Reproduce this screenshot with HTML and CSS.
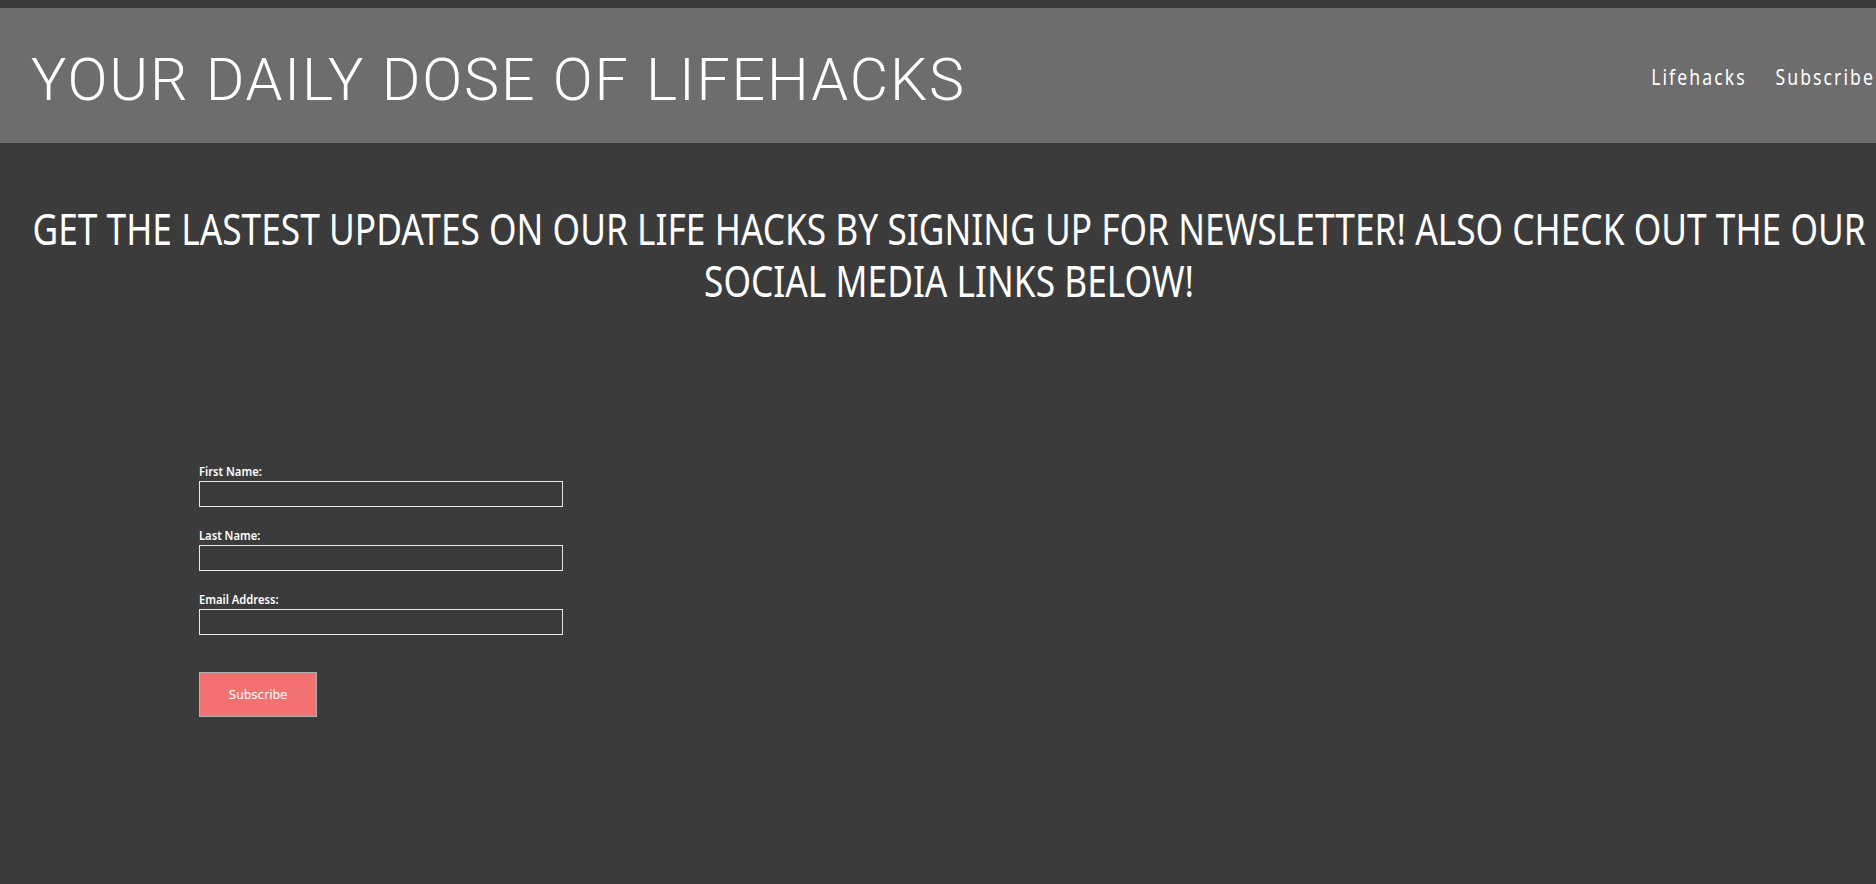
FILE: index.html
```html
<!DOCTYPE html>
<html lang="en">
<head>
<meta charset="utf-8">
<title>Your Daily Dose of Lifehacks</title>
<link rel="stylesheet" href="styles.css">
</head>
<body>
<header class="site-header">
  <h1 class="site-title">YOUR DAILY DOSE OF LIFEHACKS</h1>
  <nav class="site-nav">
    <a class="nav-link" href="#">Lifehacks</a>
    <a class="nav-link" href="#">Subscribe</a>
  </nav>
</header>
<main class="content">
  <h2 class="promo"><span class="promo-text">GET THE LASTEST UPDATES ON OUR LIFE HACKS BY SIGNING UP FOR NEWSLETTER! ALSO CHECK OUT THE OUR SOCIAL MEDIA LINKS BELOW!</span></h2>
  <form class="signup">
    <div class="field">
      <label class="field-label" for="fn">First Name:</label>
      <input class="field-input" id="fn" type="text">
    </div>
    <div class="field">
      <label class="field-label" for="ln">Last Name:</label>
      <input class="field-input" id="ln" type="text">
    </div>
    <div class="field">
      <label class="field-label" for="em">Email Address:</label>
      <input class="field-input" id="em" type="email">
    </div>
    <button class="submit" type="button">Subscribe</button>
  </form>
</main>
</body>
</html>
```

FILE: styles.css
```css
html, body {
  margin: 0;
  padding: 0;
}
body {
  background: #3b3b3b;
  padding-top: 8px;
  color: #fff;
  font-family: "Noto Sans", "DejaVu Sans", sans-serif;
  overflow: hidden;
}
.site-header {
  height: 135px;
  background: #6d6d6d;
  display: flex;
  align-items: center;
  justify-content: space-between;
  padding-left: 31px;
}
.site-title {
  margin: 0;
  padding-top: 8px;
  font-family: Roboto, "Liberation Sans", sans-serif;
  font-weight: 300;
  font-size: 59px;
  letter-spacing: 1.9px;
  color: #fff;
}
.site-nav {
  display: flex;
  gap: 36px;
  padding-top: 1px;
  padding-right: 1px;
  transform: scaleX(0.8);
  transform-origin: right center;
}
.nav-link {
  color: #fff;
  text-decoration: none;
  font-size: 22px;
  letter-spacing: 2.6px;
}
.content {
  padding-left: 22px;
}
.promo {
  margin: 59px 0 0;
  font-weight: 400;
  font-size: 44px;
  line-height: 52px;
}
.promo-text {
  display: block;
  width: 2312px;
  text-align: center;
  transform: scaleX(0.802);
  transform-origin: 0 0;
}
.signup {
  margin: 0 0 0 177px;
  padding-top: 157px;
  display: flex;
  flex-direction: column;
  align-items: flex-start;
}
.field {
  display: flex;
  flex-direction: column;
  align-items: flex-start;
  margin-bottom: 20px;
}
.field-label {
  font-size: 13px;
  font-weight: 600;
  line-height: 16px;
  margin-bottom: 2px;
  transform: scaleX(0.86);
  transform-origin: left center;
}
.field-input {
  box-sizing: border-box;
  width: 364px;
  height: 26px;
  margin: 0;
  background: transparent;
  border: 1px solid #e8e8e8;
  color: #fff;
}
.submit {
  margin-top: 17px;
  box-sizing: border-box;
  width: 118px;
  height: 45px;
  background: #f47171;
  border: 1px solid #b0b0b0;
  color: #fff;
  font-family: "DejaVu Sans", Verdana, sans-serif;
  font-size: 12px;
}
```
